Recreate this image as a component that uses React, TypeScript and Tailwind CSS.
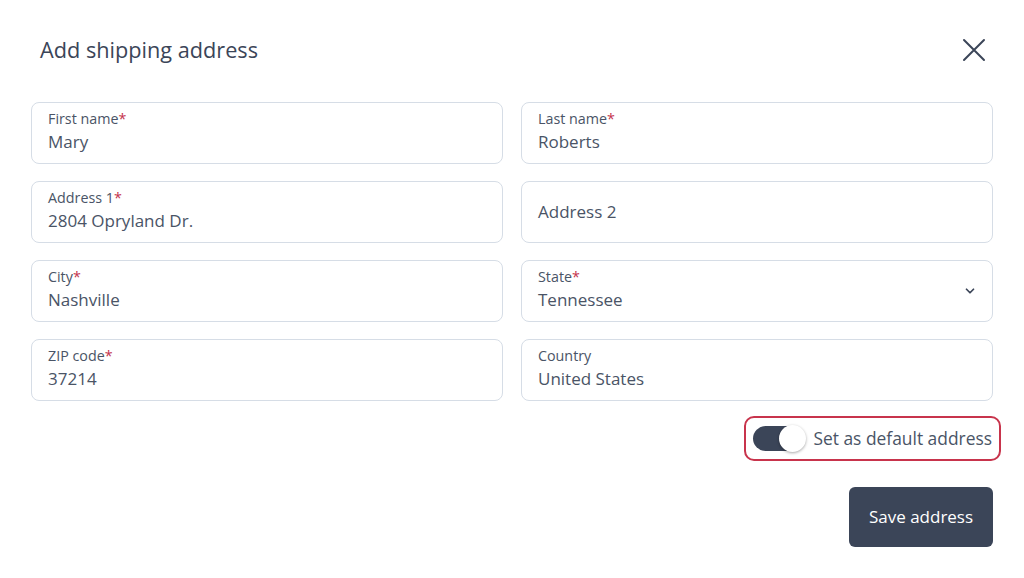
import React from "react";

const font = { fontFamily: '"Open Sans", "Liberation Sans", sans-serif' };

function Field({ label, value, required, select }: { label?: string; value: string; required?: boolean; select?: boolean }) {
  return (
    <div className="relative h-[62px] rounded-[8px] border border-[#d6dde6] bg-white px-[16px] flex flex-col justify-center">
      {label ? (
        <>
          <div className="text-[14.3px] leading-[18px] text-[#4a5466] -mt-[3px]">
            {label}
            {required && <span className="text-[#c4314b]">*</span>}
          </div>
          <div className="text-[17px] leading-[24px] text-[#4a5466] mt-[2px]">{value}</div>
        </>
      ) : (
        <div className="text-[17px] leading-[24px] text-[#4a5466]">{value}</div>
      )}
      {select && (
        <svg className="absolute right-[15px] top-[23px]" width="14" height="14" viewBox="0 0 24 24" fill="none" stroke="#3b4558" strokeWidth="3" strokeLinecap="round" strokeLinejoin="round">
          <path d="M6 9l6 6 6-6" />
        </svg>
      )}
    </div>
  );
}

export default function App() {
  return (
    <div className="w-[1024px] h-[578px] bg-white overflow-hidden" style={font}>
      <div className="flex items-center justify-between pl-[40px] pr-[38px] pt-[36px]">
        <h1 className="text-[21.7px] leading-[28px] text-[#3b4558]">Add shipping address</h1>
        <svg width="24" height="24" viewBox="0 0 24 24" fill="none" stroke="#3b4558" strokeWidth="2" strokeLinecap="round">
          <path d="M2 2L22 22M22 2L2 22" />
        </svg>
      </div>
      <div className="grid grid-cols-2 gap-x-[18px] gap-y-[17px] px-[31px] mt-[38px]">
        <Field label="First name" value="Mary" required />
        <Field label="Last name" value="Roberts" required />
        <Field label="Address 1" value="2804 Opryland Dr." required />
        <Field value="Address 2" />
        <Field label="City" value="Nashville" required />
        <Field label="State" value="Tennessee" required select />
        <Field label="ZIP code" value="37214" required />
        <Field label="Country" value="United States" />
      </div>
      <div className="flex justify-end pr-[23px] mt-[15px]">
        <div className="flex items-center gap-[8px] h-[45px] rounded-[10px] border-2 border-[#c8344c] pl-[7px] pr-[7px]">
          <div className="relative w-[52px] h-[25px] rounded-full bg-[#3b4558]">
            <div className="absolute right-[-1px] top-[-1px] w-[27px] h-[27px] rounded-full bg-white shadow-[0_1px_3px_rgba(0,0,0,0.35)]" />
          </div>
          <span className="text-[17.4px] text-[#4a5466]">Set as default address</span>
        </div>
      </div>
      <div className="flex justify-end pr-[31px] mt-[26px]">
        <button className="w-[144px] h-[60px] rounded-[6px] bg-[#3b4558] text-white text-[17px]">Save address</button>
      </div>
    </div>
  );
}
